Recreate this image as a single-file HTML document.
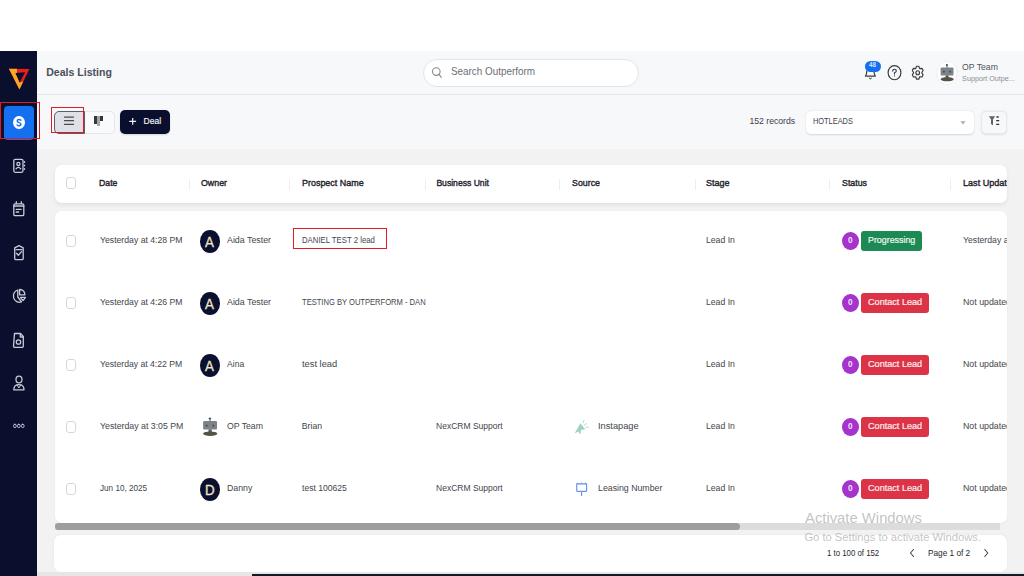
<!DOCTYPE html>
<html><head><meta charset="utf-8">
<style>
*{margin:0;padding:0;box-sizing:border-box}
html,body{width:1024px;height:576px;overflow:hidden;background:#fff;font-family:"Liberation Sans",sans-serif}
.a{position:absolute}
.t{position:absolute;white-space:nowrap;line-height:1}
.card{position:absolute;background:#fff;border-radius:7px}
.sep{position:absolute;width:1px;height:11px;background:#eeeeee;top:178.5px}
.cb{position:absolute;width:10.5px;height:12px;border:1px solid #d6d7d9;border-radius:3px;background:#fff}
.av{position:absolute;width:20.5px;height:23px;border-radius:50%;background:#0c1030}
.num{position:absolute;width:17px;height:18.5px;border-radius:50%;background:#a533cc}
.badge{position:absolute;height:20px;border-radius:3px}
svg{position:absolute;overflow:visible}
</style></head><body>
<div class="a" style="left:0;top:51px;width:37px;height:525px;background:#0a0f2e"></div>
<div class="a" style="left:37px;top:51px;width:987px;height:44px;background:#f7f8fa;border-bottom:1px solid #e4e6ea"></div>
<div class="a" style="left:37px;top:95px;width:987px;height:54px;background:#f7f8fa"></div>
<div class="a" style="left:37px;top:149px;width:987px;height:427px;background:#f2f2f2"></div>
<svg style="left:0;top:0" width="40" height="576" viewBox="0 0 40 576">
<defs><clipPath id="lg"><path fill-rule="evenodd" clip-rule="evenodd" d="M8.9 68.8 L29.4 68.9 L19.4 89.4 Z M15.3 72.9 L25.2 72.3 L19.6 82.6 Z"/></clipPath></defs>
<g clip-path="url(#lg)"><rect x="0" y="60" width="40" height="40" fill="#ea1f1a"/>
<path d="M0 60 H16.9 V72.9 L19.6 82.6 L30 80 V100 H0 Z" fill="#f6a723"/></g>
</svg>
<div class="a" style="left:4px;top:106px;width:30px;height:34px;border-radius:4px;background:#1570ef"></div>
<div class="a" style="left:13px;top:115.9px;width:12px;height:13.5px;border-radius:50%;background:#fff"></div>
<svg style="left:0;top:0" width="40" height="576"><path d="M20.9 120.3 Q20.2 119.5 19 119.5 Q17.2 119.5 17.2 121 Q17.2 122.3 19 122.6 Q20.9 122.9 20.9 124.3 Q20.9 125.8 19 125.8 Q17.8 125.8 17.1 124.9" fill="none" stroke="#1570ef" stroke-width="1.45" stroke-linecap="round"/></svg>
<div class="a" style="left:0;top:101.5px;width:40px;height:37.5px;border:1px solid #e01b24"></div>
<svg style="left:0;top:0" width="40" height="576" viewBox="0 0 40 576" fill="none" stroke="#c9cad6" stroke-width="1.3" stroke-linecap="round" stroke-linejoin="round">
<rect x="13.8" y="159.3" width="9.2" height="13" rx="1.5"/>
<circle cx="18.4" cy="163.9" r="1.6"/>
<path d="M16 168.8 Q18.4 165.8 20.8 168.8"/>
<path d="M24.5 161.6 v0.6 M24.5 165.1 v0.6 M24.5 168.7 v0.6" stroke-width="1.4"/>
<rect x="13.8" y="203.9" width="10" height="11.8" rx="1.3"/>
<path d="M16.3 201.6 v2 M21.3 201.6 v2 M13.8 206 h10 M16.2 209.3 h5 M16.2 212 h2.5"/>
<path d="M14.7 247.8 L19 245.6 L23.2 247.8 V258.5 a1.2 1.2 0 0 1 -1.2 1.2 H15.9 a1.2 1.2 0 0 1 -1.2 -1.2 Z"/>
<path d="M16 249.6 h6 M16.5 253.3 l1.8 1.9 l3.2 -3.6"/>
<path d="M17.8 290 A6 6 0 1 0 21.5 302 L17.8 297 Z"/>
<path d="M19.6 289.5 A5 5 0 0 1 24.9 294.8 H19.6 Z"/>
<path d="M20.5 297.3 h5 l-2.5 3.3 Z"/>
<path d="M14.5 333.5 h6 l2.8 3 v9.8 a1 1 0 0 1 -1 1 h-7.8 a1 1 0 0 1 -1 -1 Z"/>
<circle cx="18.5" cy="342" r="2.2"/>
<path d="M20.3 334 v3 h3"/>
<ellipse cx="19" cy="379.5" rx="3" ry="3.3"/>
<path d="M13.8 389.8 Q13.8 384.7 18.9 384.7 Q24 384.7 24 389.8 Z"/><path d="M17.2 385 L18.9 388 L20.6 385" stroke-width="1"/>
<rect x="13.6" y="424.3" width="2.6" height="3.2" rx="1.1" stroke-width="1"/><rect x="17.5" y="424.3" width="2.6" height="3.2" rx="1.1" stroke-width="1"/><rect x="21.4" y="424.3" width="2.6" height="3.2" rx="1.1" stroke-width="1"/>
</svg>
<div class="t" style="left:46.20px;top:66.96px;font-size:10.56px;color:#4b5059;font-weight:bold;transform:scale(1.0,1.12);transform-origin:0 8.94px;">Deals Listing</div>
<div class="a" style="left:423px;top:59px;width:215.5px;height:27.5px;border-radius:14px;background:#fff;border:1px solid #e2e4e8"></div>
<svg style="left:0;top:0" width="1024" height="576" fill="none" stroke="#85888d" stroke-width="1.1">
<circle cx="436.3" cy="71.6" r="3.8"/><path d="M439 74.4 L441.3 77.4" stroke-linecap="round"/></svg>
<div class="t" style="left:451.00px;top:66.94px;font-size:9.88px;color:#6b6e74;font-weight:normal;transform:scale(1.0,1.1);transform-origin:0 8.36px;">Search Outperform</div>
<svg style="left:0;top:0" width="1024" height="576" fill="none" stroke="#36393e" stroke-width="1.15" stroke-linecap="round" stroke-linejoin="round">
<path d="M866.8 71 C866.8 74.2 866.2 75 865.4 76.1 H875.4 C874.6 75 874 74.2 874 71"/>
<path d="M869.6 78 L870.4 79.2 L871.2 78" stroke-width="1"/>
<ellipse cx="894.5" cy="72.7" rx="6.4" ry="7.1"/>
<path d="M892.7 71.1 q0 -1.8 1.8 -1.8 q1.8 0 1.8 1.6 q0 1.1 -1.8 1.9 v1.1"/>
<circle cx="894.5" cy="75.9" r="0.55" fill="#36393e" stroke="none"/>
<path d="M915.68 68.63 L916.62 66.22 L918.78 66.22 L919.72 68.63 L921.98 68.37 L923.07 70.55 L921.74 72.70 L923.07 74.85 L921.98 77.03 L919.72 76.77 L918.78 79.18 L916.62 79.18 L915.68 76.77 L913.42 77.03 L912.33 74.85 L913.66 72.70 L912.33 70.55 L913.42 68.37 Z"/>
<ellipse cx="917.7" cy="72.7" rx="1.8" ry="2"/>
</svg>
<div class="a" style="left:865.1px;top:60.7px;width:15.7px;height:11px;border-radius:5.5px;background:#1570ef"></div>
<div class="t" style="left:869px;top:62.4px;font-size:6.2px;font-weight:bold;color:#d8e6ff;transform:scaleY(1.1)">48</div>
<svg style="left:934.5px;top:60.8px" width="24" height="24" viewBox="-12 -12 24 24"><ellipse cx="0" cy="0" rx="10.1" ry="11.5" fill="#fff" stroke="#e6e7ea" stroke-width="0.7"/><g transform="scale(1.0)"><ellipse cx="0.2" cy="6.2" rx="6.6" ry="2.1" fill="#575244"/><rect x="-1.4" y="2.2" width="3" height="3" fill="#4f5559"/><rect x="-6.4" y="-5.5" width="12.9" height="7.9" rx="1" fill="#7c8489"/><circle cx="-3.1" cy="-1.3" r="0.85" fill="#3a3e42"/><circle cx="3.1" cy="-1.3" r="0.85" fill="#3a3e42"/><rect x="-0.4" y="-7" width="0.8" height="1.8" fill="#4b4f55"/><circle cx="-0.1" cy="-7.8" r="1.1" fill="#465273"/></g></svg>
<div class="t" style="left:962.10px;top:63.36px;font-size:8.67px;color:#50545b;font-weight:normal;transform:scale(1.0,1.05);transform-origin:0 7.34px;">OP Team</div>
<div class="t" style="left:962.10px;top:75.11px;font-size:7.2px;color:#8a8d93;font-weight:normal;transform:scale(1.0,1.05);transform-origin:0 6.09px;">Support Outpe...</div>
<div class="a" style="left:54px;top:110.5px;width:60.5px;height:23px;border:1px solid #e6e7ea;border-radius:5px;background:#f9fafb"></div>
<div class="a" style="left:54px;top:110.5px;width:30.5px;height:23px;border:1px solid #5a5e6c;border-right-width:1.5px;border-bottom-width:1.5px;border-radius:5px 0 0 5px;background:#e0e1e6"></div>
<svg style="left:0;top:0" width="1024" height="576" stroke="#474a51" stroke-width="1.25" stroke-linecap="round">
<path d="M64.5 117 h9 M64.5 120.7 h9 M64.5 124.4 h9"/>
</svg>
<div class="a" style="left:94.2px;top:115.6px;width:2.8px;height:8.8px;background:#34373c"></div>
<div class="a" style="left:97.2px;top:115.6px;width:2.7px;height:10px;background:#a3a5a9"></div>
<div class="a" style="left:100.2px;top:115.6px;width:2.8px;height:5.2px;background:#34373c"></div>
<div class="a" style="left:51px;top:107.2px;width:33px;height:25.5px;border:1px solid #e01b24"></div>
<div class="a" style="left:120.3px;top:109.8px;width:49.7px;height:24.6px;border-radius:5px;background:#0a0f2e;box-shadow:0 1px 2px rgba(0,0,0,.15)"></div>
<svg style="left:0;top:0" width="1024" height="576" stroke="#f2f2f5" stroke-width="1.2">
<path d="M129.3 121.3 h6.8 M132.7 117.9 v6.8"/>
</svg>
<div class="t" style="left:143.60px;top:117.20px;font-size:8.51px;color:#f4f4f8;font-weight:normal;-webkit-text-stroke:0.15px #f4f4f8;transform:scale(1.0,1.12);transform-origin:0 7.20px;">Deal</div>
<div class="t" style="left:749.50px;top:117.38px;font-size:8.65px;color:#3c4048;font-weight:normal;transform:scale(1.0,1.08);transform-origin:0 7.32px;">152 records</div>
<div class="a" style="left:806.3px;top:110.6px;width:167.5px;height:23.1px;border-radius:5px;background:#fff;box-shadow:0 0.5px 2px rgba(0,0,0,.14)"></div>
<div class="t" style="left:813.30px;top:117.12px;font-size:8.6px;color:#3e4249;font-weight:normal;transform:scale(0.861,1.08);transform-origin:0 7.28px;">HOTLEADS</div>
<svg style="left:0;top:0" width="1024" height="576"><path d="M960.5 121.2 h5 l-2.5 3.2 Z" fill="#a8aaae"/></svg>
<div class="a" style="left:980.5px;top:110.7px;width:26px;height:23px;border-radius:5px;background:#f7f8fa;border:1px solid #e9eaed;box-shadow:0 0.5px 2px rgba(0,0,0,.10)"></div>
<svg style="left:0;top:0" width="1024" height="576">
<path d="M988.8 116.2 h6.4 l-2.2 3 v6 l-2 -1.2 v-4.8 Z" fill="#5f6267"/>
<path d="M996.5 117 h2.2 M996.2 120.6 h3 M996.2 124.3 h3" stroke="#2d3035" stroke-width="1.3"/>
</svg>
<div class="card" style="left:54.6px;top:165.2px;width:952px;height:37.5px;box-shadow:0 2px 4px rgba(0,0,0,.07)"></div>
<div class="cb" style="left:65.5px;top:177px"></div>
<div class="t" style="left:99.40px;top:179.12px;font-size:8.6px;color:#1f232b;font-weight:normal;-webkit-text-stroke:0.35px #1f232b;transform:scale(1.013,1.15);transform-origin:0 7.28px;">Date</div>
<div class="t" style="left:200.50px;top:179.12px;font-size:8.6px;color:#1f232b;font-weight:normal;-webkit-text-stroke:0.35px #1f232b;transform:scale(1.027,1.15);transform-origin:0 7.28px;">Owner</div>
<div class="t" style="left:301.70px;top:179.12px;font-size:8.6px;color:#1f232b;font-weight:normal;-webkit-text-stroke:0.35px #1f232b;transform:scale(1.041,1.15);transform-origin:0 7.28px;">Prospect Name</div>
<div class="t" style="left:436.40px;top:179.12px;font-size:8.6px;color:#1f232b;font-weight:normal;-webkit-text-stroke:0.35px #1f232b;transform:scale(1.0,1.15);transform-origin:0 7.28px;">Business Unit</div>
<div class="t" style="left:571.70px;top:179.12px;font-size:8.6px;color:#1f232b;font-weight:normal;-webkit-text-stroke:0.35px #1f232b;transform:scale(1.028,1.15);transform-origin:0 7.28px;">Source</div>
<div class="t" style="left:706.40px;top:179.12px;font-size:8.6px;color:#1f232b;font-weight:normal;-webkit-text-stroke:0.35px #1f232b;transform:scale(1.05,1.15);transform-origin:0 7.28px;">Stage</div>
<div class="t" style="left:841.70px;top:179.12px;font-size:8.6px;color:#1f232b;font-weight:normal;-webkit-text-stroke:0.35px #1f232b;transform:scale(1.025,1.15);transform-origin:0 7.28px;">Status</div>
<div class="a" style="left:0;top:0;width:1006.6px;height:576px;overflow:hidden"><div class="t" style="left:962.80px;top:179.12px;font-size:8.6px;color:#1f232b;font-weight:normal;-webkit-text-stroke:0.35px #1f232b;transform:scale(1.056,1.15);transform-origin:0 7.28px;">Last Updated</div>
</div><div class="sep" style="left:188.6px"></div>
<div class="sep" style="left:289.4px"></div>
<div class="sep" style="left:424.6px"></div>
<div class="sep" style="left:559.4px"></div>
<div class="sep" style="left:694.6px"></div>
<div class="sep" style="left:829.4px"></div>
<div class="sep" style="left:950.3px"></div>
<div class="card" style="left:54.6px;top:211px;width:952.5px;height:312px;box-shadow:0 1px 3px rgba(0,0,0,.04)"></div>
<div class="a" style="left:0;top:0;width:1006.6px;height:576px;overflow:hidden">
<div class="cb" style="left:65.5px;top:234.6px"></div>
<div class="t" style="left:99.70px;top:235.84px;font-size:8.7px;color:#42464d;font-weight:normal;transform:scale(0.998,1.08);transform-origin:0 7.36px;">Yesterday at 4:28 PM</div>
<div class="av" style="left:199.8px;top:229.5px"></div>
<div class="t" style="left:204.6px;top:234.08px;font-size:15.5px;color:#efe7c6;-webkit-text-stroke:0.3px #efe7c6;transform:scaleX(0.86);transform-origin:0 0">A</div>
<div class="t" style="left:226.50px;top:235.84px;font-size:8.7px;color:#42464d;font-weight:normal;transform:scale(1.017,1.08);transform-origin:0 7.36px;">Aida Tester</div>
<div class="t" style="left:301.80px;top:235.84px;font-size:8.7px;color:#42464d;font-weight:normal;transform:scale(0.895,1.08);transform-origin:0 7.36px;">DANIEL TEST 2 lead</div>
<div class="t" style="left:706.30px;top:235.84px;font-size:8.7px;color:#42464d;font-weight:normal;transform:scale(0.996,1.08);transform-origin:0 7.36px;">Lead In</div>
<div class="num" style="left:842.3px;top:231.9px"></div>
<div class="t" style="left:847.90px;top:236.02px;font-size:8.6px;color:#f0e4f6;font-weight:bold;transform:scaleX(0.95);">0</div>
<div class="badge" style="left:861.4px;top:231px;width:60.7px;height:19.9px;background:#1d8a56"></div>
<div class="t" style="left:867.80px;top:235.67px;font-size:8.9px;color:#eef7f1;font-weight:normal;-webkit-text-stroke:0.2px #eef7f1;transform:scale(0.998,1.1);transform-origin:0 7.53px;">Progressing</div>
<div class="t" style="left:962.80px;top:235.84px;font-size:8.7px;color:#42464d;font-weight:normal;transform:scale(0.998,1.08);transform-origin:0 7.36px;">Yesterday at 4:28 PM</div>
<div class="cb" style="left:65.5px;top:296.6px"></div>
<div class="t" style="left:99.70px;top:297.84px;font-size:8.7px;color:#42464d;font-weight:normal;transform:scale(0.998,1.08);transform-origin:0 7.36px;">Yesterday at 4:26 PM</div>
<div class="av" style="left:199.8px;top:291.5px"></div>
<div class="t" style="left:204.6px;top:296.08px;font-size:15.5px;color:#efe7c6;-webkit-text-stroke:0.3px #efe7c6;transform:scaleX(0.86);transform-origin:0 0">A</div>
<div class="t" style="left:226.50px;top:297.84px;font-size:8.7px;color:#42464d;font-weight:normal;transform:scale(1.017,1.08);transform-origin:0 7.36px;">Aida Tester</div>
<div class="t" style="left:301.80px;top:297.84px;font-size:8.7px;color:#42464d;font-weight:normal;transform:scale(0.872,1.08);transform-origin:0 7.36px;">TESTING BY OUTPERFORM - DAN</div>
<div class="t" style="left:706.30px;top:297.84px;font-size:8.7px;color:#42464d;font-weight:normal;transform:scale(0.996,1.08);transform-origin:0 7.36px;">Lead In</div>
<div class="num" style="left:842.3px;top:293.9px"></div>
<div class="t" style="left:847.90px;top:298.02px;font-size:8.6px;color:#f0e4f6;font-weight:bold;transform:scaleX(0.95);">0</div>
<div class="badge" style="left:861.4px;top:293.4px;width:67.2px;height:19.5px;background:#dc3446"></div>
<div class="t" style="left:867.80px;top:297.67px;font-size:8.9px;color:#fbecee;font-weight:normal;-webkit-text-stroke:0.2px #fbecee;transform:scale(1.026,1.1);transform-origin:0 7.53px;">Contact Lead</div>
<div class="t" style="left:962.80px;top:297.84px;font-size:8.7px;color:#42464d;font-weight:normal;transform:scale(1.013,1.08);transform-origin:0 7.36px;">Not updated</div>
<div class="cb" style="left:65.5px;top:358.6px"></div>
<div class="t" style="left:99.70px;top:359.84px;font-size:8.7px;color:#42464d;font-weight:normal;transform:scale(0.993,1.08);transform-origin:0 7.36px;">Yesterday at 4:22 PM</div>
<div class="av" style="left:199.8px;top:353.5px"></div>
<div class="t" style="left:204.6px;top:358.08px;font-size:15.5px;color:#efe7c6;-webkit-text-stroke:0.3px #efe7c6;transform:scaleX(0.86);transform-origin:0 0">A</div>
<div class="t" style="left:226.50px;top:359.84px;font-size:8.7px;color:#42464d;font-weight:normal;transform:scale(0.988,1.08);transform-origin:0 7.36px;">Aina</div>
<div class="t" style="left:301.80px;top:359.84px;font-size:8.7px;color:#42464d;font-weight:normal;transform:scale(1.07,1.08);transform-origin:0 7.36px;">test lead</div>
<div class="t" style="left:706.30px;top:359.84px;font-size:8.7px;color:#42464d;font-weight:normal;transform:scale(0.996,1.08);transform-origin:0 7.36px;">Lead In</div>
<div class="num" style="left:842.3px;top:355.9px"></div>
<div class="t" style="left:847.90px;top:360.02px;font-size:8.6px;color:#f0e4f6;font-weight:bold;transform:scaleX(0.95);">0</div>
<div class="badge" style="left:861.4px;top:355.4px;width:67.2px;height:19.5px;background:#dc3446"></div>
<div class="t" style="left:867.80px;top:359.67px;font-size:8.9px;color:#fbecee;font-weight:normal;-webkit-text-stroke:0.2px #fbecee;transform:scale(1.026,1.1);transform-origin:0 7.53px;">Contact Lead</div>
<div class="t" style="left:962.80px;top:359.84px;font-size:8.7px;color:#42464d;font-weight:normal;transform:scale(1.013,1.08);transform-origin:0 7.36px;">Not updated</div>
<div class="cb" style="left:65.5px;top:420.6px"></div>
<div class="t" style="left:99.70px;top:421.84px;font-size:8.7px;color:#42464d;font-weight:normal;transform:scale(1.008,1.08);transform-origin:0 7.36px;">Yesterday at 3:05 PM</div>
<svg style="left:198.2px;top:414.7px" width="24" height="24" viewBox="-12 -12 24 24"><g transform="scale(1.08)"><ellipse cx="0.2" cy="6.2" rx="6.6" ry="2.1" fill="#575244"/><rect x="-1.4" y="2.2" width="3" height="3" fill="#4f5559"/><rect x="-6.4" y="-5.5" width="12.9" height="7.9" rx="1" fill="#7c8489"/><circle cx="-3.1" cy="-1.3" r="0.85" fill="#3a3e42"/><circle cx="3.1" cy="-1.3" r="0.85" fill="#3a3e42"/><rect x="-0.4" y="-7" width="0.8" height="1.8" fill="#4b4f55"/><circle cx="-0.1" cy="-7.8" r="1.1" fill="#465273"/></g></svg>
<div class="t" style="left:226.50px;top:421.84px;font-size:8.7px;color:#42464d;font-weight:normal;transform:scale(1.002,1.08);transform-origin:0 7.36px;">OP Team</div>
<div class="t" style="left:301.80px;top:421.84px;font-size:8.7px;color:#42464d;font-weight:normal;transform:scale(1.0,1.08);transform-origin:0 7.36px;">Brian</div>
<div class="t" style="left:436.40px;top:421.84px;font-size:8.7px;color:#42464d;font-weight:normal;transform:scale(0.98,1.08);transform-origin:0 7.36px;">NexCRM Support</div>
<svg style="left:570px;top:416px" width="24" height="24" viewBox="0 0 24 24">
<path d="M10.4 7.3 L15.3 13.3 L11 14 L10.7 17.8 L9 17.6 L9.1 15.6 L4.7 17.3 Z" fill="#a0d2c3"/>
<path d="M13.9 4.4 l-0.6 2.3 M14.3 9 l2.2 -1.3 M15.6 11.2 l2.8 0" stroke="#b3dbcf" stroke-width="1" stroke-linecap="round"/>
</svg><div class="t" style="left:597.70px;top:421.84px;font-size:8.7px;color:#42464d;font-weight:normal;transform:scale(1.065,1.08);transform-origin:0 7.36px;">Instapage</div>
<div class="t" style="left:706.30px;top:421.84px;font-size:8.7px;color:#42464d;font-weight:normal;transform:scale(0.996,1.08);transform-origin:0 7.36px;">Lead In</div>
<div class="num" style="left:842.3px;top:417.9px"></div>
<div class="t" style="left:847.90px;top:422.02px;font-size:8.6px;color:#f0e4f6;font-weight:bold;transform:scaleX(0.95);">0</div>
<div class="badge" style="left:861.4px;top:417.4px;width:67.2px;height:19.5px;background:#dc3446"></div>
<div class="t" style="left:867.80px;top:421.67px;font-size:8.9px;color:#fbecee;font-weight:normal;-webkit-text-stroke:0.2px #fbecee;transform:scale(1.026,1.1);transform-origin:0 7.53px;">Contact Lead</div>
<div class="t" style="left:962.80px;top:421.84px;font-size:8.7px;color:#42464d;font-weight:normal;transform:scale(1.013,1.08);transform-origin:0 7.36px;">Not updated</div>
<div class="cb" style="left:65.5px;top:482.6px"></div>
<div class="t" style="left:99.70px;top:483.84px;font-size:8.7px;color:#42464d;font-weight:normal;transform:scale(0.938,1.08);transform-origin:0 7.36px;">Jun 10, 2025</div>
<div class="av" style="left:199.8px;top:477.5px"></div>
<div class="t" style="left:205.2px;top:482.08px;font-size:15.5px;color:#efe7c6;-webkit-text-stroke:0.3px #efe7c6;transform:scaleX(0.86);transform-origin:0 0">D</div>
<div class="t" style="left:226.50px;top:483.84px;font-size:8.7px;color:#42464d;font-weight:normal;transform:scale(1.01,1.08);transform-origin:0 7.36px;">Danny</div>
<div class="t" style="left:301.80px;top:483.84px;font-size:8.7px;color:#42464d;font-weight:normal;transform:scale(0.988,1.08);transform-origin:0 7.36px;">test 100625</div>
<div class="t" style="left:436.40px;top:483.84px;font-size:8.7px;color:#42464d;font-weight:normal;transform:scale(0.98,1.08);transform-origin:0 7.36px;">NexCRM Support</div>
<svg style="left:570px;top:478px" width="24" height="24" viewBox="0 0 24 24" fill="none" stroke="#6496e4" stroke-width="1.15">
<rect x="6.7" y="5.9" width="9.9" height="7.4" rx="0.5"/><path d="M11.6 13.3 V18.1"/>
<path d="M6.8 5.9 q0.9 -1.8 1.8 0 M10.7 5.9 q0.9 -1.8 1.8 0 M14.7 5.9 q0.9 -1.8 1.8 0" stroke-width="1"/>
</svg><div class="t" style="left:597.70px;top:483.84px;font-size:8.7px;color:#42464d;font-weight:normal;transform:scale(1.009,1.08);transform-origin:0 7.36px;">Leasing Number</div>
<div class="t" style="left:706.30px;top:483.84px;font-size:8.7px;color:#42464d;font-weight:normal;transform:scale(0.996,1.08);transform-origin:0 7.36px;">Lead In</div>
<div class="num" style="left:842.3px;top:479.9px"></div>
<div class="t" style="left:847.90px;top:484.02px;font-size:8.6px;color:#f0e4f6;font-weight:bold;transform:scaleX(0.95);">0</div>
<div class="badge" style="left:861.4px;top:479.4px;width:67.2px;height:19.5px;background:#dc3446"></div>
<div class="t" style="left:867.80px;top:483.67px;font-size:8.9px;color:#fbecee;font-weight:normal;-webkit-text-stroke:0.2px #fbecee;transform:scale(1.026,1.1);transform-origin:0 7.53px;">Contact Lead</div>
<div class="t" style="left:962.80px;top:483.84px;font-size:8.7px;color:#42464d;font-weight:normal;transform:scale(1.013,1.08);transform-origin:0 7.36px;">Not updated</div>
</div>
<div class="a" style="left:293px;top:228.3px;width:94px;height:20.4px;border:1px solid #e01b24"></div>
<div class="a" style="left:54.8px;top:522.7px;width:945px;height:7.3px;background:#dcdcdc"></div>
<div class="a" style="left:54.8px;top:522.7px;width:685.5px;height:7.3px;border-radius:4px;background:#9e9e9e"></div>
<div class="card" style="left:54px;top:534.5px;width:953.3px;height:37.2px;box-shadow:0 0 3px rgba(0,0,0,.05)"></div>
<div class="t" style="left:826.90px;top:548.87px;font-size:8.3px;color:#262a31;font-weight:normal;transform:scale(0.943,1.08);transform-origin:0 7.03px;">1 to 100 of 152</div>
<div class="t" style="left:927.80px;top:549.27px;font-size:8.3px;color:#262a31;font-weight:normal;transform:scale(0.994,1.08);transform-origin:0 7.03px;">Page 1 of 2</div>
<svg style="left:0;top:0" width="1024" height="576" fill="none" stroke="#3a3e44" stroke-width="1.05" stroke-linecap="round" stroke-linejoin="round">
<path d="M913.5 549.5 L910.5 553 L913.5 556.5"/><path d="M984.8 549.5 L987.8 553 L984.8 556.5"/></svg>
<div class="a" style="left:37px;top:572px;width:987px;height:4px;background:#e6e6e6"></div>
<div class="a" style="left:252px;top:574px;width:772px;height:2px;background:#121a2a"></div>
<div class="t" style="left:805.00px;top:509.75px;font-size:15.3px;color:rgba(150,150,150,.58);font-weight:normal;transform:scale(0.969,1.0);transform-origin:0 12.95px;">Activate Windows</div>
<div class="t" style="left:804.40px;top:531.92px;font-size:11.2px;color:rgba(150,150,150,.58);font-weight:normal;">Go to Settings to activate Windows.</div>
</body></html>
